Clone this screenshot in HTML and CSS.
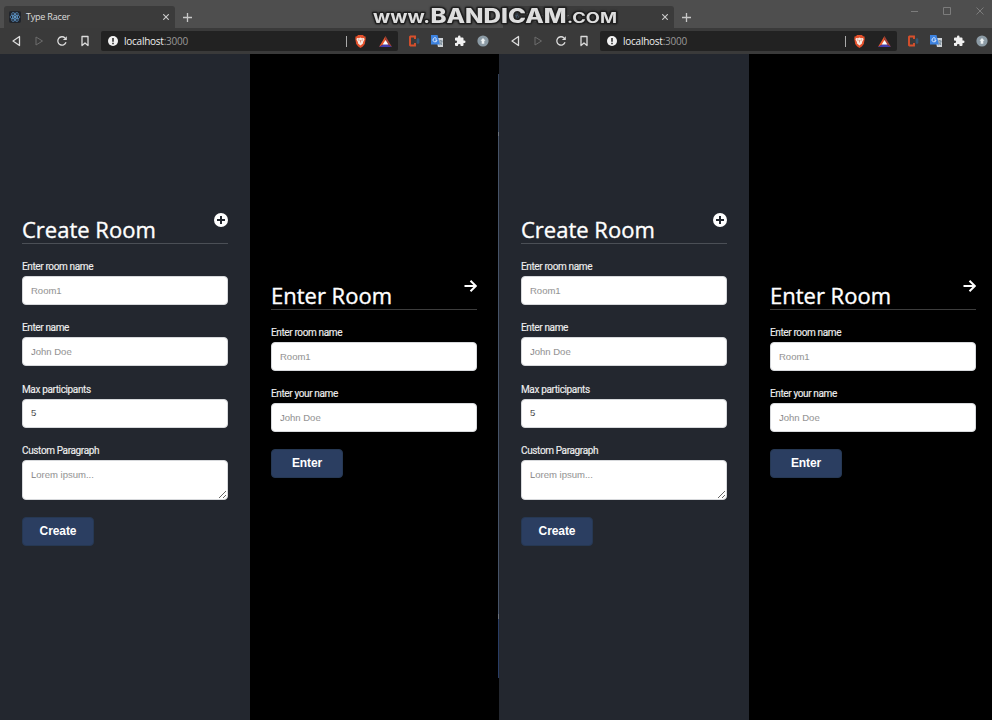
FILE: index.html
```
<!DOCTYPE html>
<html lang="en">
<head>
<meta charset="utf-8">
<title>Type Racer</title>
<link rel="stylesheet" href="styles.css">
<script src="windows.js" defer></script>
</head>
<body>
<main class="desktop" id="desktop"></main>
<svg class="watermark" width="252" height="30" viewBox="0 0 252 30">
  <g class="mark">
    <text x="6" y="23" class="mark-small" textLength="57" lengthAdjust="spacingAndGlyphs">www.</text>
    <text x="63.500" y="23" class="mark-big" textLength="136" lengthAdjust="spacingAndGlyphs">BANDICAM</text>
    <text x="200" y="23" class="mark-mid" textLength="50" lengthAdjust="spacingAndGlyphs">.COM</text>
  </g>
</svg>
<div class="caption-buttons">
  <svg width="80" height="14" viewBox="0 0 80 14" fill="none" stroke="#7c7c7c"><path d="M3 7.500h7M35.500 3.500h7v7h-7zM68.500 3.500l7 7m0-7l-7 7"/></svg>
</div>
<i class="window-edge"></i>
<template id="window-template">
<section class="window">
  <header class="titlebar">
    <div class="tab">
      <svg class="react" width="12" height="12" viewBox="0 0 12 12"><rect width="12" height="12" rx="2" fill="#20242b"/><g fill="none" stroke="#5b91c4" stroke-width=".8"><ellipse cx="6" cy="6" rx="5" ry="2"/><ellipse cx="6" cy="6" rx="5" ry="2" transform="rotate(60 6 6)"/><ellipse cx="6" cy="6" rx="5" ry="2" transform="rotate(120 6 6)"/></g><circle cx="6" cy="6" r="1" fill="#79b8e8"/></svg>
      <span class="tab-title">Type Racer</span>
      <svg class="tab-close" width="6" height="6" viewBox="0 0 6 6" stroke="#ccc" stroke-width="1.100"><path d="M.2.2l5.600 5.600m0-5.600L.2 5.800"/></svg>
    </div>
    <svg class="new-tab" width="9" height="9" viewBox="0 0 9 9" stroke="#c8c8c8" stroke-width="1.300"><path d="M4.500 0v9M0 4.500h9"/></svg>
  </header>
  <nav class="toolbar">
    <svg class="nav-icons" width="80" height="14" viewBox="0 0 80 14" fill="none" stroke="#dcdcdc" stroke-width="1.300" stroke-linejoin="round"><path d="M9.500 2.500v9L3 7z"/><path d="M26 3v8L32.500 7z" stroke="#6c6c6c" stroke-width="1"/><path d="M55 4A4.200 4.200 0 1 0 56 8.300"/><path d="M56.800 2.200v3.900h-3.900z" fill="#dcdcdc" stroke="none"/><path d="M72 2.500h6v9L75 9l-3 2.500z"/></svg>
    <div class="address">
      <svg width="10" height="10" viewBox="0 0 10 10"><circle cx="5" cy="5" r="5" fill="#f2f2f2"/><path d="M5 2v3.700M5 6.800v1.400" stroke="#222" stroke-width="1.500"/></svg>
      <span class="url">localhost<span class="port">:3000</span></span>
      <i class="divider"></i>
      <svg class="brave" width="11" height="13" viewBox="0 0 11 13"><path d="M3 0h5l1 1.200 1.500.3.200 2.500-.9 5-2 2.600L5.500 13l-2.300-1.400-2-2.600L.3 4l.2-2.500L2 1.200z" fill="#e4502b"/><path d="M2 3l2 .2 1.500-.6 1.500.6L9 3l.5 1.500L8 7.200l.2 1-2.700 2.300L2.800 8.200l.2-1L1.500 4.500z" fill="#f7e9e2"/><path d="M3 4.800l1.500.5M8 4.800l-1.500.5M5.500 5v2.500" stroke="#d85d3c" stroke-width=".6"/></svg>
      <svg class="rewards" width="13" height="11" viewBox="0 0 13 11"><path d="M6.500 0L0 11l6.500-3.700z" fill="#e9572b"/><path d="M6.500 0L13 11 6.500 7.300z" fill="#a54139"/><path d="M0 11h13L6.500 7.300z" fill="#453cac"/><path d="M6.500 4L3.700 8.600h5.600z" fill="#fff"/></svg>
    </div>
    <div class="extensions">
      <svg width="12" height="12" viewBox="0 0 12 12" fill="none"><path d="M7 4V1.500H2.500L2 2v8l.5.500H7V8" stroke="#d7502c" stroke-width="1.900"/><path d="M10 3v6M8.500 5h3M8.500 7h3" stroke="#315f83" stroke-width="1"/></svg>
      <svg width="12" height="12" viewBox="0 0 12 12"><path d="M5 3h7v9H7z" fill="#d0d4d8"/><path d="M0 0h6.500L9 9.500H0z" fill="#3d82df"/><path d="M5.500 3.500A2 2 0 1 0 6 5H4.300" fill="none" stroke="#dceaff"/><path d="M8 6h3.500M9.800 5v1M11 6c0 2-1 3-2.500 4M8.700 7l2.300 3" fill="none" stroke="#617789" stroke-width=".8"/></svg>
      <svg width="12" height="12" viewBox="0 0 24 24"><path d="M20.500 11H19V7a2 2 0 0 0-2-2h-4V3.500a2.500 2.500 0 0 0-5 0V5H4a2 2 0 0 0-2 2v3.800h1.500a2.700 2.700 0 0 1 0 5.400H2V20a2 2 0 0 0 2 2h3.800v-1.500a2.700 2.700 0 0 1 5.400 0V22H17a2 2 0 0 0 2-2v-4h1.500a2.500 2.500 0 0 0 0-5z" fill="#f1f1f1"/></svg>
      <svg width="12" height="12" viewBox="0 0 12 12"><circle cx="6" cy="6" r="5.600" fill="#8c9ba5"/><path d="M6 3l2.500 2.800H7.300V8.700H4.700V5.800H3.500z" fill="#edf2f3"/></svg>
    </div>
  </nav>
  <div class="page">
    <form class="panel create">
      <div class="heading"><h1>Create Room</h1><svg class="plus" width="14" height="14" viewBox="0 0 14 14"><circle cx="7" cy="7" r="7" fill="#fff"/><path d="M7 3v8M3 7h8" stroke="#23272f" stroke-width="2"/></svg></div>
      <label>Enter room name<input placeholder="Room1"></label>
      <label>Enter name<input placeholder="John Doe"></label>
      <label>Max participants<input value="5"></label>
      <label>Custom Paragraph<textarea placeholder="Lorem ipsum..."></textarea></label>
      <button type="button">Create</button>
    </form>
    <form class="panel enter">
      <div class="heading"><h1>Enter Room</h1><svg class="arrow" width="13" height="12" viewBox="0 0 13 12" fill="none" stroke="#fff" stroke-width="2"><path d="M.5 6H12M6.500 .8L11.800 6 6.500 11.200"/></svg></div>
      <label>Enter room name<input placeholder="Room1"></label>
      <label>Enter your name<input placeholder="John Doe"></label>
      <button type="button">Enter</button>
    </form>
  </div>
</section>
</template>
</body>
</html>
```
FILE: styles.css
```
* { box-sizing: border-box; }
body { margin: 0; background: #000; overflow: hidden; }
svg { display: block; flex: none; }
.desktop { display: flex; width: 992px; height: 720px; overflow: hidden; }
.window { flex: 0 0 499px; height: 720px; display: flex; flex-direction: column; }
.titlebar { height: 28px; background: #4e4e4e; display: flex; align-items: flex-end; padding-left: 4px; }
.tab { width: 171px; height: 22px; border-radius: 3px 3px 0 0; background: #3b3b3b; display: flex; align-items: center; padding: 0 6px 0 5px; }
.tab-title { font: 9px "Open Sans", sans-serif; letter-spacing: -.2px; color: #ddd; margin-left: 5px; position: relative; top: -.5px; }
.window + .window .tab-title, .window + .window .react { opacity: .4; }
.tab-close { margin-left: auto; }
.new-tab { margin: 0 0 6px 8px; }
.toolbar { height: 26px; flex: none; background: #3a3a3a; display: flex; align-items: center; padding-left: 10px; }
.address { width: 297px; height: 20px; margin-left: 11px; padding: 0 6px 0 7px; border-radius: 2px; background: #222; display: flex; align-items: center; }
.url { font: 10px "Open Sans", sans-serif; letter-spacing: -.25px; color: #eee; margin-left: 6px; }
.port { color: #999; }
.divider { width: 1px; height: 11px; background: #aaa; margin-left: auto; }
.brave { margin-left: 8px; }
.rewards { margin-left: 13px; }
.extensions { display: flex; gap: 11px; margin-left: 10px; }
.page { flex: 1; display: grid; grid-template-columns: 250px 249px; }
.panel { padding: 0 22px; }
.create { background: #23272f; padding-top: 157px; }
.enter { background: #000; padding: 223px 22px 0 21px; }
.heading { height: 33px; border-bottom: 1px solid #4b4f56; display: flex; justify-content: space-between; margin-bottom: 16px; }
.enter .heading { border-color: #3d3d3d; }
h1 { margin: 2px 0 0; color: #fff; font: 400 22px/32px "Open Sans", sans-serif; letter-spacing: 0; -webkit-text-stroke: .35px #fff; }
.plus { margin-top: 2px; }
.arrow { margin-top: 3px; }
label { display: block; color: #eee; font: 10px/14px Roboto, sans-serif; letter-spacing: -.37px; -webkit-text-stroke: .15px #eee; margin-bottom: 16.400px; }
input, textarea { display: block; width: 100%; height: 29px; margin: 2px 0 0; padding: 0 8px 1px; border: 1px solid #d7d9dc; border-radius: 4px; background: #fff; color: #111; font: 9.500px "Liberation Sans", sans-serif; outline: 0; }
textarea { height: 40px; padding-top: 8px; resize: vertical; overflow: hidden; }
::placeholder { color: #777; opacity: 1; }
button { display: block; width: 72px; height: 29px; margin-top: 17px; border: 1px solid #263853; border-radius: 4px; padding: 0 0 1px; background: #2b3e61; color: #fff; font: bold 12px "Liberation Sans", sans-serif; letter-spacing: -.1px; }
.watermark { position: absolute; left: 367px; top: 0; z-index: 2; }
.mark { fill: #dedede; stroke: #202020; stroke-width: 2.500px; paint-order: stroke; stroke-linejoin: round; filter: drop-shadow(0 0 1px #222); font-family: Inter, sans-serif; font-weight: 800; }
.mark-small { font-size: 18px; font-weight: 700; }
.mark-big { font-size: 19.500px; }
.mark-mid { font-size: 14px; font-weight: 700; }
.caption-buttons { position: absolute; left: 908px; top: 4px; z-index: 2; }
.window-edge { position: absolute; left: 498px; top: 74px; width: 1px; height: 604px; background: linear-gradient(#34435a 0 58px, #69717c 58px 62px, #465368 62px 540px, #69717c 540px 545px, #293d65 545px); }
```
FILE: windows.js
```
const desktop = document.getElementById("desktop");
const template = document.getElementById("window-template");
for (let i = 0; i < 2; i++) desktop.append(template.content.cloneNode(true));
```
